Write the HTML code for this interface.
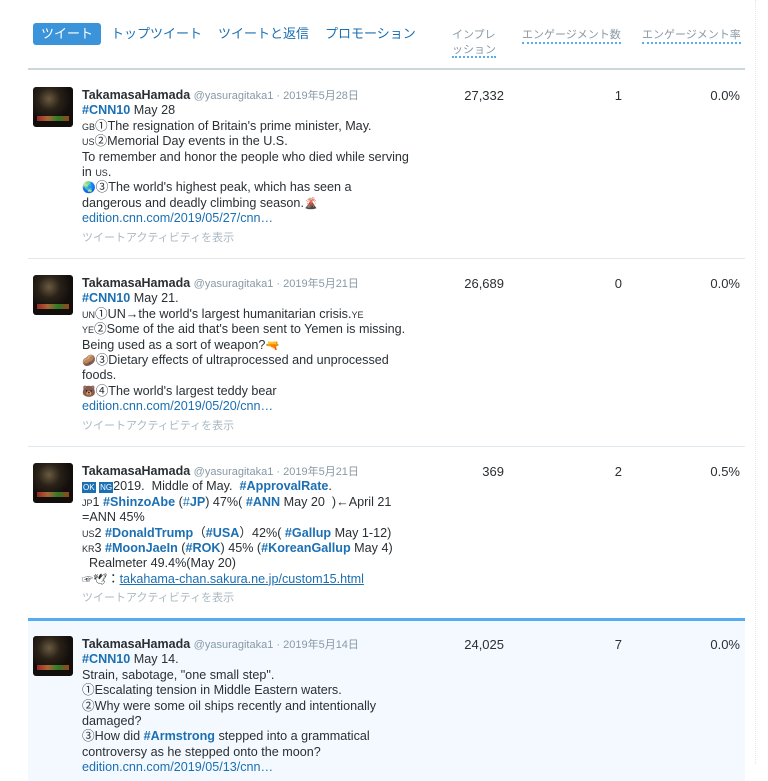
<!DOCTYPE html>
<html><head><meta charset="utf-8"><style>
body{margin:0;width:768px;height:764px;overflow:hidden;background:#fff;font-family:"Liberation Sans","Noto Sans CJK JP",sans-serif;color:#292f33;position:relative}
.tab{position:absolute;top:23px;font-size:13px;color:#1b6fb3;height:22px;line-height:22px}
.h{position:absolute;font-size:11px;color:#8899a6;line-height:17px}
.hd{border-bottom:2px dotted #55acee}
.row{position:absolute;left:28px;width:717px;border-bottom:1px solid #e1e8ed}
.av{position:absolute;left:5px;width:40px;height:40px;border-radius:3px;background:radial-gradient(circle at 40% 30%,#6a5a40 0,#2a2218 30%,#120e0c 60%),#111;overflow:hidden}
.av:after{content:"";position:absolute;left:4px;bottom:6px;width:32px;height:5px;background:linear-gradient(90deg,#c33,#e84,#3a3,#d52);opacity:.7}
.tx{position:absolute;left:54px;width:332px;font-size:12.6px;line-height:15.4px;color:#292f33}
.tx span{line-height:1}
.nm{font-weight:bold;font-size:12.5px}
.sn{color:#8899a6;font-size:11px}
.b{color:#1b6fb3;font-weight:bold}
.l{color:#1b6fb3}
.act{color:#aab8c2;font-size:11px;margin-top:4px;line-height:15px}
.num{position:absolute;font-size:13px;color:#292f33;text-align:right;width:80px}
.sm{font-size:9px}
.e{font-size:11px}
</style></head><body>
<div class="tab" style="left:33px;width:68px;background:#3b94d9;color:#fff;border-radius:3px;text-align:center;">ツイート</div>
<div class="tab" style="left:111px">トップツイート</div>
<div class="tab" style="left:218px">ツイートと返信</div>
<div class="tab" style="left:325px">プロモーション</div>
<div class="h" style="left:452px;top:28px;width:46px;line-height:15px"><span>インプレ</span><br><span class="hd">ッション</span></div>
<div class="h hd" style="left:522px;top:28px;line-height:14px">エンゲージメント数</div>
<div class="h hd" style="left:642px;top:28px;line-height:14px">エンゲージメント率</div>
<div style="position:absolute;left:28px;top:68px;width:717px;height:2px;background:#ccd6dd"></div>
<div style="position:absolute;left:755px;top:0;height:764px;border-left:1px dotted #e1e8ed"></div>

<div class="row" style="top:70px;height:188px">
<div class="av" style="top:17px"></div>
<div class="tx" style="top:18px">
<span class="nm">TakamasaHamada</span> <span class="sn">@yasuragitaka1 · 2019年5月28日</span><br>
<span class="b">#CNN10</span> May 28<br>
<span class="sm">GB</span>①The resignation of Britain's prime minister, May.<br>
<span class="sm">US</span>②Memorial Day events in the U.S.<br>
To remember and honor the people who died while serving in <span class="sm">US</span>.<br>
<span class="e">🌏</span>③The world's highest peak, which has seen a dangerous and deadly climbing season.<span class="e">🌋</span><br>
<span class="l">edition.cnn.com/2019/05/27/cnn…</span>
<div class="act">ツイートアクティビティを表示</div></div>
<div class="num" style="left:396px;top:18px">27,332</div>
<div class="num" style="left:514px;top:18px">1</div>
<div class="num" style="left:632px;top:18px">0.0%</div>
</div>

<div class="row" style="top:259px;height:187px">
<div class="av" style="top:16px"></div>
<div class="tx" style="top:17px">
<span class="nm">TakamasaHamada</span> <span class="sn">@yasuragitaka1 · 2019年5月21日</span><br>
<span class="b">#CNN10</span> May 21.<br>
<span class="sm">UN</span>①UN→the world's largest humanitarian crisis.<span class="sm">YE</span><br>
<span class="sm">YE</span>②Some of the aid that's been sent to Yemen is missing. Being used as a sort of weapon?<span class="e">🔫</span><br>
<span class="e">🥔</span>③Dietary effects of ultraprocessed and unprocessed foods.<br>
<span class="e">🐻</span>④The world's largest teddy bear<br>
<span class="l">edition.cnn.com/2019/05/20/cnn…</span>
<div class="act">ツイートアクティビティを表示</div></div>
<div class="num" style="left:396px;top:17px">26,689</div>
<div class="num" style="left:514px;top:17px">0</div>
<div class="num" style="left:632px;top:17px">0.0%</div>
</div>

<div class="row" style="top:447px;height:171px;border-bottom:none">
<div class="av" style="top:16px"></div>
<div class="tx" style="top:17px;width:335px">
<span class="nm">TakamasaHamada</span> <span class="sn">@yasuragitaka1 · 2019年5月21日</span><br>
<span style="background:#1b6fb3;color:#fff;font-size:8px;padding:1px 1px">OK</span> <span style="background:#1b6fb3;color:#fff;font-size:8px;padding:1px 1px">NG</span>2019.&nbsp; Middle of May.&nbsp; <span class="b">#ApprovalRate</span>.<br>
<span class="sm">JP</span>1 <span class="b">#ShinzoAbe</span> (<span class="l">#</span><span class="b">JP</span>) 47%( <span class="b">#ANN</span> May 20&nbsp; )←April 21 =ANN 45%<br>
<span class="sm">US</span>2 <span class="b">#DonaldTrump</span>（<span class="b">#USA</span>）42%( <span class="b">#Gallup</span> May 1-12)<br>
<span class="sm">KR</span>3 <span class="b">#MoonJaeIn</span> (<span class="b">#ROK</span>) 45% (<span class="b">#KoreanGallup</span> May 4)<br>
&nbsp; Realmeter 49.4%(May 20)<br>
<span class="e">☞🕊</span>：<span class="l" style="text-decoration:underline">takahama-chan.sakura.ne.jp/custom15.html</span>
<div class="act">ツイートアクティビティを表示</div></div>
<div class="num" style="left:396px;top:17px">369</div>
<div class="num" style="left:514px;top:17px">2</div>
<div class="num" style="left:632px;top:17px">0.5%</div>
</div>

<div class="row" style="top:618px;height:160px;background:#f3f9fe;border-top:3px solid #55acee;border-bottom:none">
<div class="av" style="top:15px"></div>
<div class="tx" style="top:16px">
<span class="nm">TakamasaHamada</span> <span class="sn">@yasuragitaka1 · 2019年5月14日</span><br>
<span class="b">#CNN10</span> May 14.<br>
Strain, sabotage, "one small step".<br>
①Escalating tension in Middle Eastern waters.<br>
②Why were some oil ships recently and intentionally damaged?<br>
③How did <span class="b">#Armstrong</span> stepped into a grammatical controversy as he stepped onto the moon?<br>
<span class="l">edition.cnn.com/2019/05/13/cnn…</span></div>
<div class="num" style="left:396px;top:16px">24,025</div>
<div class="num" style="left:514px;top:16px">7</div>
<div class="num" style="left:632px;top:16px">0.0%</div>
</div>
</body></html>
